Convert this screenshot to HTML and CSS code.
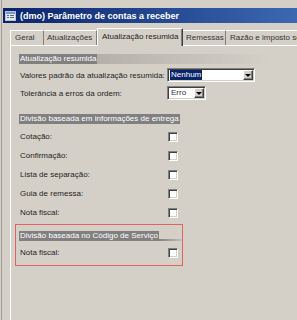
FILE: index.html
```html
<!DOCTYPE html>
<html>
<head>
    <title>(dmo) Parâmetro de contas a receber</title>
    <link rel="stylesheet" href="styles.css">
</head>
<body>
<div class="window">
    <div class="titlebar">
        <svg class="title-icon" width="11" height="10" viewBox="0 0 11 10">
            <rect x="0.5" y="0.5" width="10" height="9" fill="#e8e8e8" stroke="#b8c4dc"/>
            <rect x="1" y="1" width="9" height="2" fill="#7d96c8"/>
            <rect x="2" y="4" width="2" height="1" fill="#506a9a"/>
            <rect x="5" y="4" width="4" height="1" fill="#506a9a"/>
            <rect x="2" y="6" width="2" height="1" fill="#506a9a"/>
            <rect x="5" y="6" width="4" height="1" fill="#506a9a"/>
        </svg>
        <span class="title-text">(dmo) Parâmetro de contas a receber</span>
    </div>

    <div class="tabs">
        <div class="tab tab-geral">Geral</div>
        <div class="tab tab-atual">Atualizações</div>
        <div class="tab tab-active">Atualização resumida</div>
        <div class="tab tab-remessas">Remessas</div>
        <div class="tab tab-razao">Razão e imposto sobre vendas</div>
    </div>

    <div class="panel">
        <div class="group">
            <div class="group-header header-wide">
                <span class="group-title">Atualização resumida</span>
                <span class="group-tail tail-band"></span>
            </div>
            <div class="field-row first-row">
                <span class="field-label">Valores padrão da atualização resumida:</span>
                <div class="combo combo-wide">
                    <span class="combo-value selected">Nenhum</span>
                    <span class="combo-button"></span>
                </div>
            </div>
            <div class="field-row">
                <span class="field-label">Tolerância a erros da ordem:</span>
                <div class="combo combo-narrow">
                    <span class="combo-value">Erro</span>
                    <span class="combo-button"></span>
                </div>
            </div>
        </div>

        <div class="group group-delivery">
            <div class="group-header">
                <span class="group-title">Divisão baseada em informações de entrega</span>
            </div>
            <div class="check-list">
                <div class="check-row"><span class="check-label">Cotação:</span><span class="check"></span></div>
                <div class="check-row"><span class="check-label">Confirmação:</span><span class="check"></span></div>
                <div class="check-row"><span class="check-label">Lista de separação:</span><span class="check"></span></div>
                <div class="check-row"><span class="check-label">Guia de remessa:</span><span class="check"></span></div>
                <div class="check-row"><span class="check-label">Nota fiscal:</span><span class="check"></span></div>
            </div>
        </div>

        <div class="group group-service">
            <div class="group-header">
                <span class="group-title">Divisão baseada no Código de Serviço</span>
                <span class="group-tail tail-line"></span>
            </div>
            <div class="check-row service-row"><span class="check-label">Nota fiscal:</span><span class="check"></span></div>
        </div>
    </div>
</div>
</body>
</html>
```

FILE: styles.css
```css
* {
    margin: 0;
    padding: 0;
    box-sizing: border-box;
}

body {
    font-family: 'Liberation Sans', Arial, sans-serif;
    font-size: 8px;
    background-color: #d4d0c8;
    color: #1e1e1e;
    height: 100vh;
    overflow: hidden;
}

.window {
    height: 100%;
    margin-left: 1px;
    border-left: 1px solid #a19e98;
    padding-top: 8px;
    display: flex;
    flex-direction: column;
}

.titlebar {
    margin-left: 1px;
    height: 15px;
    padding-left: 2px;
    background: linear-gradient(to right, #0a246a, #3c68b2);
    display: flex;
    align-items: center;
    gap: 4px;
    color: #ffffff;
    font-size: 9px;
    font-weight: bold;
    white-space: nowrap;
    overflow: hidden;
}

.title-icon {
    flex-shrink: 0;
}

.tabs {
    height: 22px;
    margin-left: 8px;
    display: flex;
    align-items: flex-end;
    white-space: nowrap;
    position: relative;
    z-index: 1;
}

.tab {
    height: 15px;
    line-height: 14px;
    padding-left: 3px;
    border-top: 1px solid #ffffff;
    border-right: 1px solid #808080;
    color: #333;
    flex-shrink: 0;
}

.tab-geral {
    width: 34px;
    padding-left: 4px;
    border-left: 1px solid #ffffff;
}

.tab-atual {
    width: 53px;
}

.tab-active {
    width: 86px;
    height: 18px;
    line-height: 16px;
    margin-bottom: -1px;
    padding-left: 4px;
    border-left: 1px solid #ffffff;
    border-right: 1px solid #404040;
    background: #d4d0c8;
    box-shadow: inset -1px 0 #808080;
    color: #1e1e1e;
}

.tab-remessas {
    width: 43px;
}

.tab-razao {
    flex: 1;
    flex-shrink: 1;
    min-width: 0;
    overflow: hidden;
    padding-left: 4px;
    border-right: none;
}

.panel {
    flex: 1;
    margin-left: 8px;
    border-top: 1px solid #ffffff;
    border-left: 1px solid #ffffff;
    padding: 8px 0 0 4px;
}

.group {
    padding-left: 4px;
}

.group-header {
    height: 10px;
    display: flex;
}

.header-wide {
    width: 251px;
}

.group-title {
    background: #808080;
    color: #ffffff;
    line-height: 10px;
    padding: 0 1px;
    white-space: nowrap;
}

.group-tail {
    flex: 1;
}

.tail-band {
    background: linear-gradient(to right, #b4b1ab, #d4d0c8);
}

.tail-line {
    align-self: flex-end;
    height: 2px;
    background: linear-gradient(to right, #808080, #c4c0b8);
}

.field-row {
    height: 14px;
    margin-top: 4px;
    display: flex;
    align-items: center;
}

.field-label {
    width: 148px;
    padding-left: 1px;
    white-space: nowrap;
}

.combo {
    height: 14px;
    background: #ffffff;
    border-top: 1px solid #808080;
    border-left: 1px solid #808080;
    border-bottom: 1px solid #ffffff;
    border-right: 1px solid #ffffff;
    box-shadow: inset 1px 1px #404040, inset -1px -1px #d4d0c8;
    display: flex;
    align-items: center;
}

.combo-wide {
    width: 88px;
}

.combo-narrow {
    width: 39px;
}

.combo-value {
    margin-left: 2px;
    padding: 0 1px;
    line-height: 10px;
    color: #333;
}

.combo-value.selected {
    background: #0a246a;
    color: #ffffff;
}

.combo-button {
    margin-left: auto;
    margin-right: 1px;
    width: 10px;
    height: 10px;
    background: #d4d0c8;
    border-top: 1px solid #ffffff;
    border-left: 1px solid #ffffff;
    border-bottom: 1px solid #404040;
    border-right: 1px solid #404040;
    box-shadow: inset -1px -1px #808080;
    display: flex;
    justify-content: center;
    align-items: center;
}

.combo-button::after {
    content: '';
    width: 0;
    height: 0;
    border-left: 3px solid transparent;
    border-right: 3px solid transparent;
    border-top: 3px solid #000000;
}

.group-delivery {
    margin-top: 14px;
}

.check-list {
    margin-top: 3px;
}

.check-row {
    height: 19px;
    line-height: 19px;
    display: flex;
}

.check-label {
    width: 149px;
    padding-left: 1px;
    white-space: nowrap;
}

.check {
    width: 10px;
    height: 10px;
    margin-top: 5px;
    background: #ffffff;
    border-top: 1px solid #808080;
    border-left: 1px solid #808080;
    border-bottom: 1px solid #ffffff;
    border-right: 1px solid #ffffff;
    box-shadow: inset 1px 1px #404040, inset -1px -1px #d4d0c8;
}

.group-service {
    width: 168px;
    margin-top: 2px;
    border: 1px solid #e06464;
    padding: 6px 0 3px 3px;
}

.service-row {
    margin-top: 2px;
}
```
